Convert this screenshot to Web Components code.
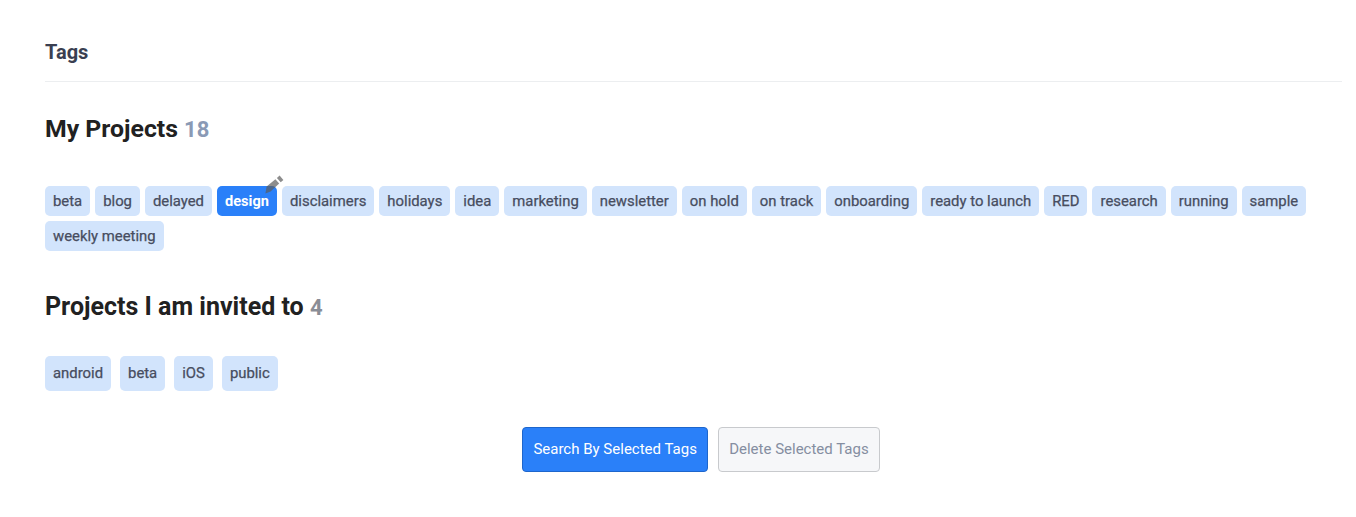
<!DOCTYPE html>
<html>
<head>
<meta charset="utf-8">
<title>Tags</title>
<style>
  html, body { margin: 0; background: #fff; }
  body { font-family: Roboto, "Liberation Sans", sans-serif; }
</style>
</head>
<body>
<tags-page>
  <span slot="title">Tags</span>
  <tag-group heading="My Projects" count="18" tags="beta,blog,delayed,design,disclaimers,holidays,idea,marketing,newsletter,on hold,on track,onboarding,ready to launch,RED,research,running,sample,weekly meeting" selected="design"></tag-group>
  <tag-group variant="invited" heading="Projects I am invited to" count="4" tags="android,beta,iOS,public"></tag-group>
  <div slot="actions">
    <action-button kind="primary">Search By Selected Tags</action-button>
    <action-button kind="disabled">Delete Selected Tags</action-button>
  </div>
</tags-page>

<script>
class TagsPage extends HTMLElement {
  constructor() {
    super();
    this.attachShadow({ mode: "open" });
    this.shadowRoot.innerHTML = `<style>
      :host { display: block; padding: 41px 14px 0 45px; }
      header {
        font-size: 20px; font-weight: 700; line-height: 22px; color: #3a3f51;
        padding-bottom: 18px; border-bottom: 1px solid #eceef0;
      }
      .actions { display: block; margin-top: 36px; }
      ::slotted([slot="actions"]) { display: flex; justify-content: center; gap: 10px; padding-left: 15px; }
    </style>
    <header><slot name="title"></slot></header>
    <slot></slot>
    <div class="actions"><slot name="actions"></slot></div>`;
  }
}

class TagGroup extends HTMLElement {
  constructor() {
    super();
    this.attachShadow({ mode: "open" });
  }

  connectedCallback() {
    const tags = this.getAttribute("tags").split(",");
    const selected = this.getAttribute("selected");
    this.shadowRoot.innerHTML = `<style>
      :host { display: block; }
      h2 {
        margin: 33px 0 42px; font-size: 24.8px; font-weight: 700; line-height: 28px; color: #212121;
      }
      h2 span { color: #8a9ab5; font-size: 22px; }
      .list { display: flex; flex-wrap: wrap; gap: 5px; }
      :host([variant="invited"]) h2 { margin: 42px 0 34px; font-size: 25px; }
      :host([variant="invited"]) h2 span { color: #8a8d96; }
      :host([variant="invited"]) .list { gap: 9px; }
    </style>
    <h2>${this.getAttribute("heading")} <span>${this.getAttribute("count")}</span></h2>
    <div class="list"></div>`;
    const list = this.shadowRoot.querySelector(".list");
    tags.forEach((name) => {
      const chip = document.createElement("tag-chip");
      chip.textContent = name;
      if (name === selected) chip.setAttribute("selected", "");
      if (this.getAttribute("variant") === "invited") chip.setAttribute("tall", "");
      list.appendChild(chip);
    });
  }
}

class TagChip extends HTMLElement {
  constructor() {
    super();
    this.attachShadow({ mode: "open" });
  }

  connectedCallback() {
    const pencil = this.hasAttribute("selected")
      ? `<svg class="pencil" width="20" height="20" viewBox="0 0 20 20">
          <path d="M2.6 11.6 11.4 4.2 15.2 8.6 6.6 16.4 1.4 18.6 Z M12.9 2.9 15.6 0.6 19.4 5 16.7 7.3 Z" fill="#5c5c5c" fill-opacity=".7"/>
        </svg>`
      : "";
    this.shadowRoot.innerHTML = `<style>
      :host {
        display: block; position: relative; box-sizing: border-box; height: 30px;
        padding: 0 8px; border-radius: 5px; background: #d2e4fc; color: #474d60;
        font-size: 14.87px; font-weight: 400; -webkit-text-stroke: 0.25px #474d60;
        line-height: 30px; white-space: nowrap;
      }
      :host([tall]) { height: 35px; line-height: 34px; }
      :host([selected]) {
        background: #2a80f9; color: #fff; font-weight: 700; font-size: 14.6px; -webkit-text-stroke: 0;
      }
      .pencil { position: absolute; left: 47px; top: -11px; }
    </style><slot></slot>${pencil}`;
  }
}

class ActionButton extends HTMLElement {
  constructor() {
    super();
    this.attachShadow({ mode: "open" });
    this.shadowRoot.innerHTML = `<style>
      :host {
        display: block; box-sizing: border-box; height: 45px; padding: 0 10.2px;
        border: 1px solid #1e66cc; border-radius: 4px; background: #2a80f9; color: #fff;
        font-size: 15px; line-height: 42px; white-space: nowrap;
      }
      :host([kind="disabled"]) { background: #f6f7f9; border-color: #c8cacd; color: #858ea1; padding: 0 10.1px; }
    </style><slot></slot>`;
  }
}

customElements.define("tags-page", TagsPage);
customElements.define("tag-group", TagGroup);
customElements.define("tag-chip", TagChip);
customElements.define("action-button", ActionButton);
</script>
</body>
</html>
